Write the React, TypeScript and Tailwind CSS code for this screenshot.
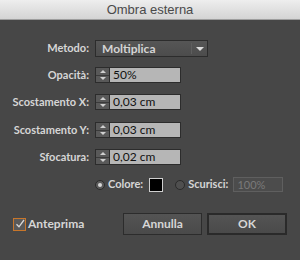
function Spin() {
  return (
    <div className="w-[15px] h-full flex flex-col border border-[#2c2c2c] bg-[#595959]">
      <div className="flex-1 flex items-center justify-center border-b border-[#3a3a3a]">
        <div className="w-0 h-0 border-l-[3px] border-r-[3px] border-b-[3px] border-l-transparent border-r-transparent border-b-[#d0d0d0]" />
      </div>
      <div className="flex-1 flex items-center justify-center">
        <div className="w-0 h-0 border-l-[3px] border-r-[3px] border-t-[3px] border-l-transparent border-r-transparent border-t-[#d0d0d0]" />
      </div>
    </div>
  );
}

function Row({ label, value, className }: { label: string; value: string; className: string }) {
  return (
    <div className={`flex items-center h-4 gap-[6px] ${className}`}>
      <div className="w-[89px] text-right">{label}</div>
      <div className="flex h-full">
        <Spin />
        <div className="w-[71px] h-full bg-[#b6b6b6] border border-[#2c2c2c] border-l-0 pl-[3px] text-[12px] leading-[14px] font-normal text-[#111]">
          {value}
        </div>
      </div>
    </div>
  );
}

export default function App() {
  return (
    <div className="w-[300px] h-[260px] bg-[#474747] overflow-hidden font-['Lato',sans-serif] font-bold text-[11px] text-[#d6d6d6]">
      <div className="h-5 bg-gradient-to-b from-[#eeeeee] to-[#d4d4d4] border-b border-[#9e9e9e] flex items-center justify-center font-['Liberation_Sans',Arial,sans-serif] font-normal text-[13px] text-[#4a4a4a]">
        Ombra esterna
      </div>

      <div className="pt-5">
        {/* Metodo */}
        <div className="flex items-center h-[17px] gap-[6px]">
          <div className="w-[89px] text-right">Metodo:</div>
          <div className="w-[113px] h-full flex items-center bg-gradient-to-b from-[#565656] to-[#4c4c4c] border border-[#2c2c2c]">
            <div className="flex-1 pl-[6px] text-[12px] text-[#d4d4d4]">Moltiplica</div>
            <div className="w-px h-[11px] bg-[#3a3a3a] border-r border-[#5e5e5e]" />
            <div className="w-[15px] flex justify-center">
              <div className="w-0 h-0 border-l-[4px] border-r-[4px] border-t-[4px] border-l-transparent border-r-transparent border-t-[#dcdcdc]" />
            </div>
          </div>
        </div>

        <Row label="Opacità:" value="50%" className="mt-[10px]" />
        <Row label="Scostamento X:" value="0,03 cm" className="mt-[11px]" />
        <Row label="Scostamento Y:" value="0,03 cm" className="mt-3" />
        <Row label="Sfocatura:" value="0,02 cm" className="mt-[11px]" />

        {/* Colore / Scurisci */}
        <div className="flex items-center h-[15px] mt-3 pl-[95px]">
          <div className="w-[10px] h-[10px] rounded-full border border-[#2a2a2a] bg-[#5a5a5a] flex items-center justify-center">
            <div className="w-[4px] h-[4px] rounded-full bg-[#d8d8d8]" />
          </div>
          <div className="ml-[3px]">Colore:</div>
          <div className="ml-[6px] w-[14px] h-[14px] border border-[#cfcfcf] bg-black" />
          <div className="ml-[12px] w-[10px] h-[10px] rounded-full border border-[#2a2a2a] bg-[#4f4f4f]" />
          <div className="ml-[3px]">Scurisci:</div>
          <div className="ml-[5px] w-[50px] h-[15px] border border-[#5f5f5f] bg-[#4c4c4c] pl-[3px] text-[11px] leading-[13px] font-normal text-[#7a7a7a]">
            100%
          </div>
        </div>

        {/* Bottom */}
        <div className="flex items-center mt-[21px] pl-[13px] pr-[13px]">
          <div className="w-[13px] h-[13px] border border-[#c8762a] bg-[#595959] flex items-center justify-center">
            <svg width="10" height="10" viewBox="0 0 10 10" fill="none">
              <path d="M1.5 5.2 L4 7.8 L9 1" stroke="#d8d8d8" strokeWidth="1.3" />
            </svg>
          </div>
          <div className="ml-[2px] text-[12px]">Anteprima</div>
          <div className="flex-1" />
          <button className="w-[79px] h-[22px] bg-gradient-to-b from-[#545454] to-[#4a4a4a] border border-[#2c2c2c] text-[12px] text-[#d6d6d6]">
            Annulla
          </button>
          <button className="ml-[5px] w-[80px] h-[22px] bg-gradient-to-b from-[#545454] to-[#4a4a4a] border-2 border-[#2a2a2a] text-[12px] text-[#d6d6d6]">
            OK
          </button>
        </div>
      </div>
    </div>
  );
}
